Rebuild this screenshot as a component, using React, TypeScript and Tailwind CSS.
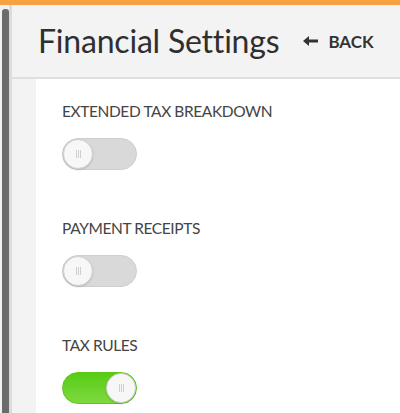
import React from "react";

function Toggle({ on }: { on: boolean }) {
  return (
    <div
      className={
        "relative w-[75px] h-[32px] rounded-full border " +
        (on
          ? "bg-gradient-to-b from-[#56cc10] to-[#7ed93e] border-[#5cc81a]"
          : "bg-[#d9d9d9] border-[#cfcfcf]")
      }
    >
      <div
        className={
          "absolute top-[0px] w-[30px] h-[30px] rounded-full bg-[#f7f7f7] border border-[#d0d0d0] shadow-[0_1px_2px_rgba(0,0,0,0.15)] flex items-center justify-center gap-[1px] " +
          (on ? "right-[0px]" : "left-[0px]")
        }
      >
        <span className="w-[1px] h-[8px] bg-[#cfcfcf]" />
        <span className="w-[1px] h-[8px] bg-[#cfcfcf]" />
        <span className="w-[1px] h-[8px] bg-[#cfcfcf]" />
      </div>
    </div>
  );
}

function Setting({ label, on }: { label: string; on: boolean }) {
  return (
    <div className="flex flex-col">
      <div className="text-[15.5px] leading-[20px] text-[#444] tracking-[-0.4px]">{label}</div>
      <div className="mt-[17px]">
        <Toggle on={on} />
      </div>
    </div>
  );
}

export default function App() {
  return (
    <div
      className="w-[400px] h-[413px] bg-white overflow-hidden flex flex-col"
      style={{ fontFamily: "Lato, 'Open Sans', sans-serif" }}
    >
      <div className="h-[5px] bg-[#f7a242] shrink-0" />
      <div className="flex flex-1 min-h-0 bg-[#f1f1f1]">
        <div className="w-[2px]" />
        <div className="w-[7px] mt-[4px] bg-[#6b6b6b] rounded-t-[3px]" />
        <div className="w-[3px] bg-[#dcdcdc]" />
        <div className="flex-1 flex flex-col">
          <div className="h-[74px] shrink-0 bg-[#f3f3f3] border-b-2 border-[#dfdfdf] flex items-center pl-[26px]">
            <div className="text-[32px] text-[#2f2f2f] leading-none tracking-[-0.2px]">Financial Settings</div>
            <div className="ml-[24px] flex items-center gap-[10px] text-[#333]">
              <svg width="15" height="10" viewBox="0 0 15 10">
                <path d="M0 5 L6 0 L6 3.5 L15 3.5 L15 6.5 L6 6.5 L6 10 Z" fill="#333" />
              </svg>
              <span className="text-[17px] font-bold leading-none">BACK</span>
            </div>
          </div>
          <div className="flex flex-1">
            <div className="w-[24px] bg-[#f3f3f3]" />
            <div className="flex-1 bg-white pl-[26px] pt-[22px] flex flex-col gap-[48px]">
              <Setting label="EXTENDED TAX BREAKDOWN" on={false} />
              <Setting label="PAYMENT RECEIPTS" on={false} />
              <Setting label="TAX RULES" on={true} />
            </div>
          </div>
        </div>
      </div>
    </div>
  );
}
